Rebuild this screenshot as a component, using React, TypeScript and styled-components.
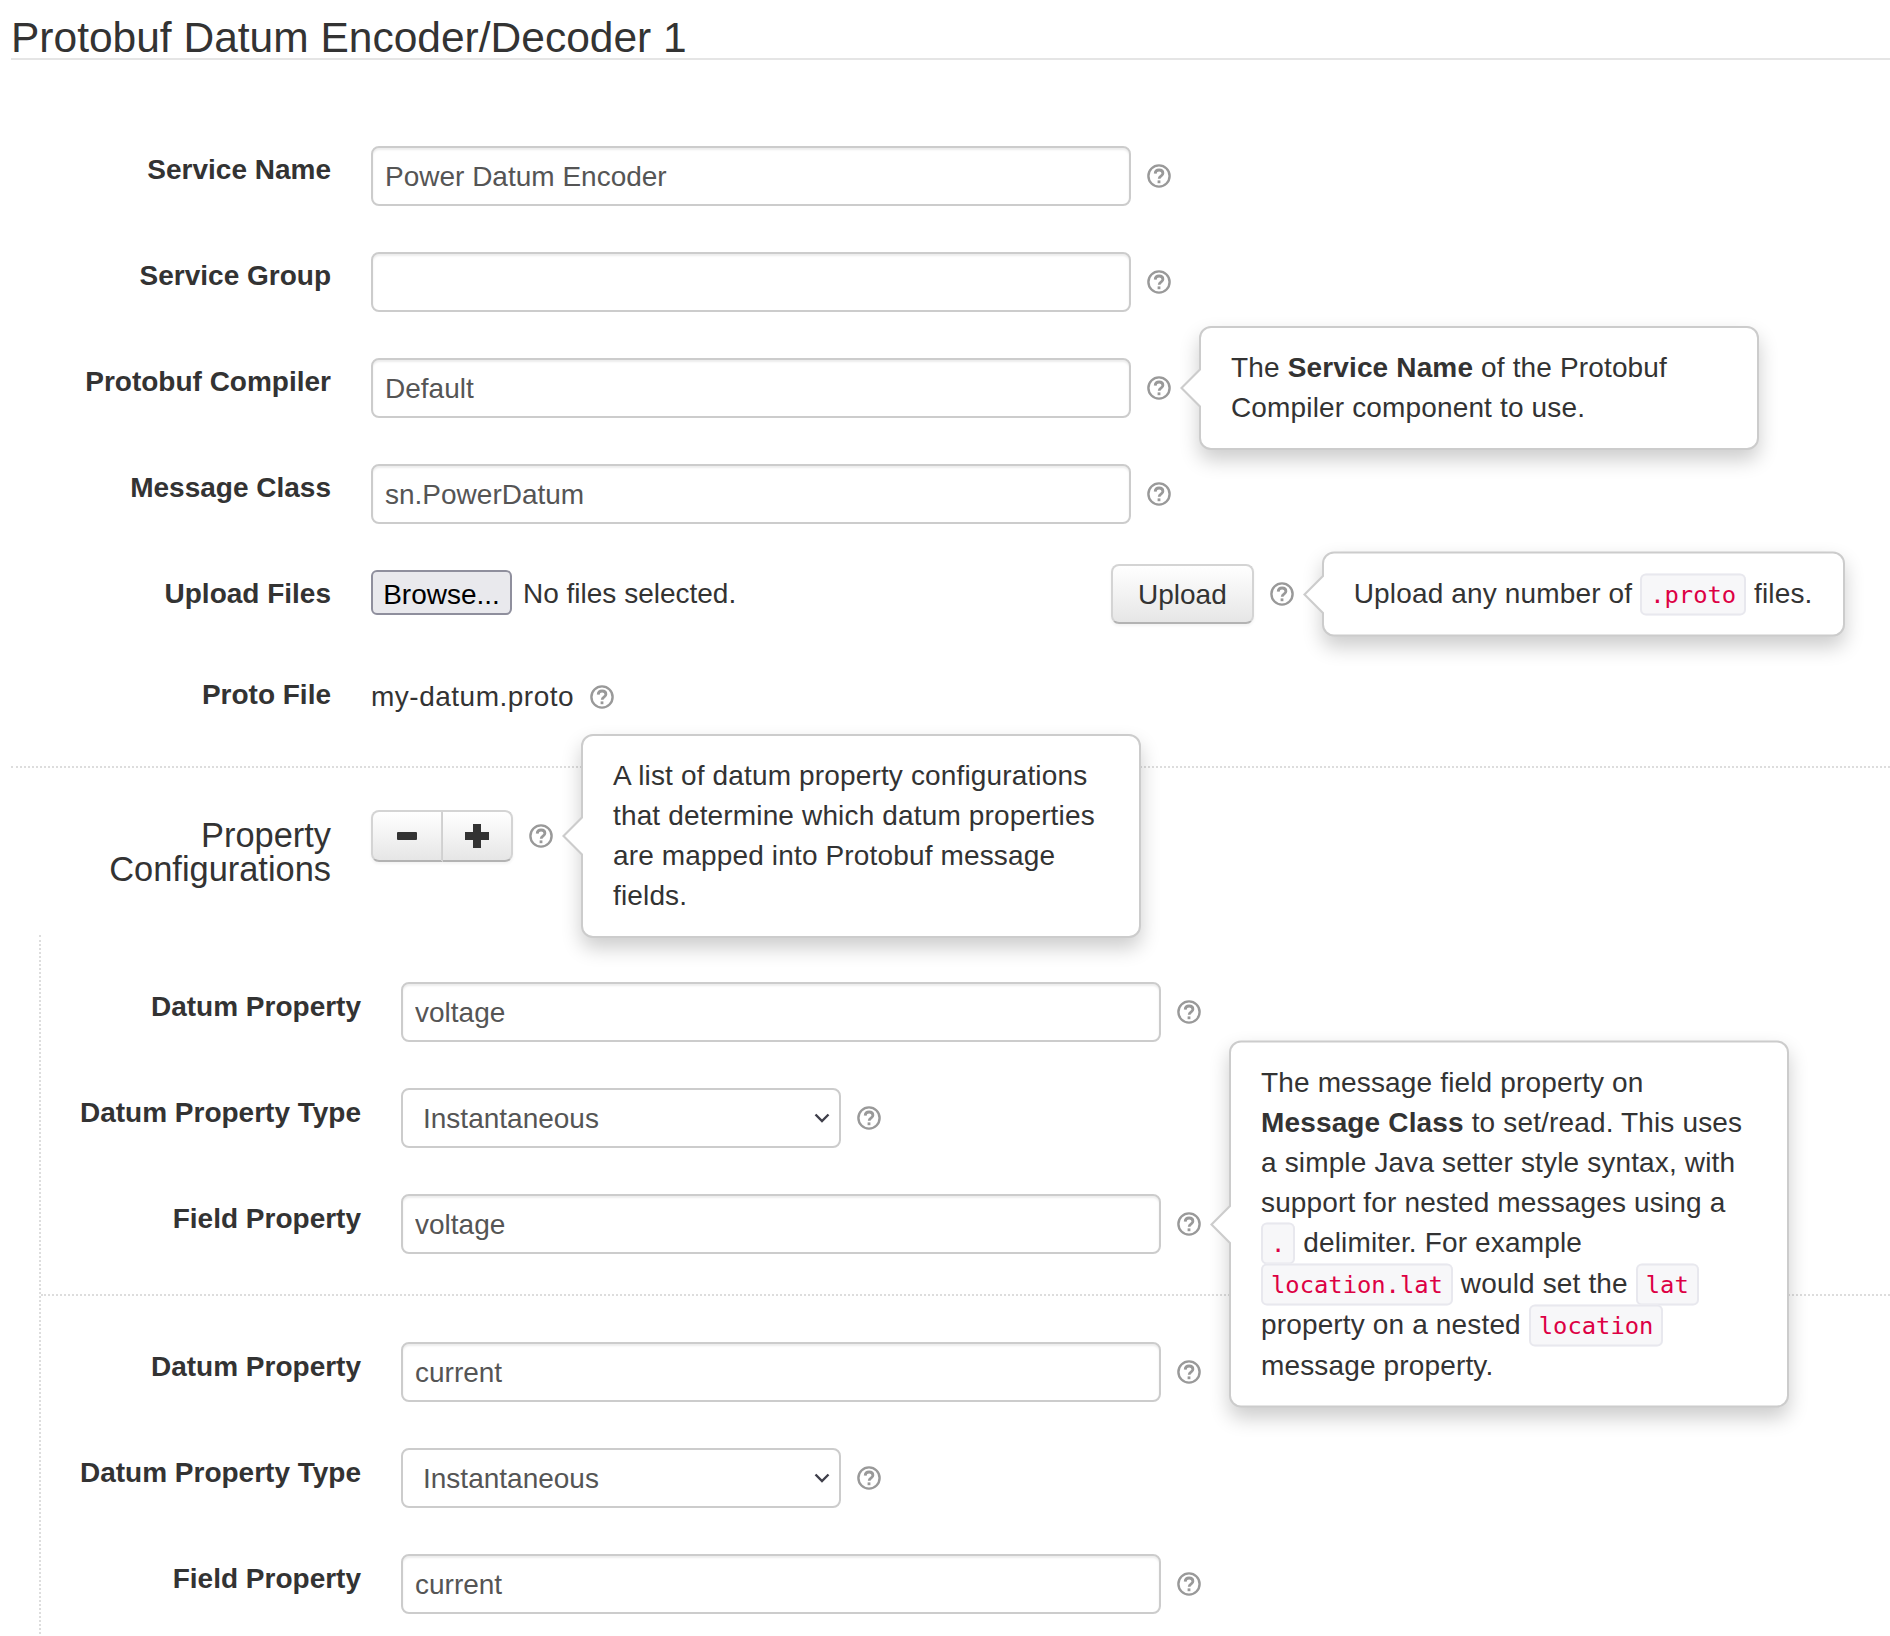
import React from 'react';
import styled, { createGlobalStyle } from 'styled-components';

const GlobalStyle = createGlobalStyle`
  body {
    margin: 0;
    background: #fff;
    color: #333;
    font-family: "Liberation Sans", Arial, sans-serif;
    font-size: 28px;
    line-height: 40px;
  }
`;

const Page = styled.div`
  height: 1636px;
  overflow: hidden;
`;

const Title = styled.h1`
  margin: 0 0 0 11px;
  height: 58px;
  border-bottom: 2px solid #e5e5e5;
  font-size: 42.5px;
  font-weight: 400;
  line-height: 76px;
  white-space: nowrap;
  box-sizing: content-box;
`;

const Form = styled.form<{ $top: number }>`
  padding: ${(p) => p.$top}px 0 0 11px;
`;

const Row = styled.div<{ $after?: number }>`
  display: grid;
  grid-template-columns: 320px 1fr;
  column-gap: 40px;
  align-items: start;
  margin-bottom: ${(p) => p.$after ?? 46}px;
`;

const Label = styled.label<{ $top?: number }>`
  padding-top: ${(p) => p.$top ?? 4}px;
  font-weight: 700;
  text-align: right;
  white-space: nowrap;
`;

const SectionLabel = styled.div`
  padding-top: 8px;
  font-size: 34.4px;
  line-height: 34px;
  text-align: right;
`;

const Control = styled.div`
  display: flex;
  align-items: center;
  gap: 16px;
`;

const TextInput = styled.input`
  box-sizing: border-box;
  width: 760px;
  height: 60px;
  padding: 2px 12px 0;
  border: 2px solid #ccc;
  border-radius: 8px;
  background: #fff;
  box-shadow: inset 0 2px 2px rgba(0, 0, 0, 0.075);
  color: #555;
  font: inherit;
  outline: none;
`;

const SelectWrap = styled.div`
  position: relative;
  width: 440px;
  height: 60px;
`;

const Select = styled.select`
  appearance: none;
  box-sizing: border-box;
  width: 100%;
  height: 100%;
  padding: 2px 20px 0;
  border: 2px solid #ccc;
  border-radius: 8px;
  background: #fff;
  color: #555;
  font: inherit;
  outline: none;
`;

const Chevron = styled.svg`
  position: absolute;
  top: 25px;
  right: 11px;
  width: 16px;
  height: 10px;
  pointer-events: none;
`;

const FileField = styled.div`
  display: flex;
  align-items: center;
  gap: 11px;
  width: 724px;
  padding-bottom: 3px;
`;

const BrowseButton = styled.button`
  box-sizing: border-box;
  width: 141px;
  height: 45px;
  padding: 3px 0 0;
  border: 2px solid #8f8f9d;
  border-radius: 6px;
  background: #e9e9ed;
  color: #000;
  font: inherit;
`;

const FileStatus = styled.span`
  padding-top: 3px;
`;

const Button = styled.button`
  box-sizing: border-box;
  height: 60px;
  padding: 2px 25px 0;
  border: 2px solid #d4d4d4;
  border-bottom-color: #b3b3b3;
  border-radius: 8px;
  background: linear-gradient(#fff, #e6e6e6);
  box-shadow: 0 2px 3px rgba(0, 0, 0, 0.05);
  color: #333;
  font: inherit;
`;

const ButtonGroup = styled.div`
  display: flex;
`;

const GroupButton = styled(Button)<{ $side: 'left' | 'right' }>`
  display: flex;
  align-items: center;
  justify-content: center;
  width: ${(p) => (p.$side === 'left' ? 72 : 70)}px;
  height: 52px;
  padding: 0;
  border-radius: ${(p) => (p.$side === 'left' ? '8px 0 0 8px' : '0 8px 8px 0')};
  ${(p) => (p.$side === 'right' ? 'border-left: 0;' : '')}
`;

const StaticText = styled.div`
  display: flex;
  align-items: center;
  gap: 16px;
  padding-top: 2px;
  letter-spacing: 0.5px;
`;

const HelpWrap = styled.span`
  position: relative;
  display: inline-flex;
  flex: none;
  width: 24px;
  height: 24px;
  letter-spacing: 0;
`;

const Popover = styled.div<{ $width?: string }>`
  position: absolute;
  z-index: 2;
  top: 50%;
  left: 52px;
  box-sizing: border-box;
  width: ${(p) => p.$width ?? '560px'};
  padding: 20px 30px;
  border: 2px solid #ccc;
  border-radius: 12px;
  background: #fff;
  box-shadow: 0 10px 20px rgba(0, 0, 0, 0.2);
  color: #333;
  letter-spacing: 0.15px;
  transform: translateY(-50%);

  &::before,
  &::after {
    content: '';
    position: absolute;
    top: 50%;
    width: 0;
    height: 0;
    border-style: solid;
    border-width: 20px 20px 20px 0;
    transform: translateY(-50%);
  }

  &::before {
    left: -21px;
    border-color: transparent #ccc transparent transparent;
  }

  &::after {
    left: -18px;
    border-color: transparent #fff transparent transparent;
  }
`;

const Code = styled.code`
  padding: 5px 8px;
  border: 2px solid #e8e8ee;
  border-radius: 6px;
  background: #f7f7f9;
  color: #dd0044;
  font-family: "DejaVu Sans Mono", "Liberation Mono", monospace;
  font-size: 23.8px;
  letter-spacing: 0;
`;

const Divider = styled.hr`
  margin: 0 0 0 11px;
  border: 0;
  border-top: 2px dotted #ddd;
`;

const Nested = styled.div`
  margin: 49px 0 0 39px;
  padding-top: 47px;
  padding-bottom: 60px;
  border-left: 2px dotted #ddd;
`;

const ItemDivider = styled.hr`
  margin: 0 0 46px;
  border: 0;
  border-top: 2px dotted #ddd;
`;

const HelpIcon: React.FC = () => (
  <svg width="24" height="24" viewBox="0 0 24 24" fill="none">
    <circle cx="12" cy="12" r="10.6" stroke="#999" strokeWidth="2.4" />
    <path
      d="M8.2 9.6c.1-2.200 1.700-3.600 3.900-3.600 2.200 0 3.800 1.300 3.800 3.200 0 1.500-.9 2.200-1.900 2.900-1 .7-1.800 1.200-1.800 2.600"
      stroke="#999"
      strokeWidth="2.8"
    />
    <rect x="10.600" y="16.400" width="2.800" height="2.800" fill="#999" />
  </svg>
);

const Help: React.FC<{ children?: React.ReactNode; width?: string }> = ({ children, width }) => (
  <HelpWrap>
    <HelpIcon />
    {children && <Popover $width={width}>{children}</Popover>}
  </HelpWrap>
);

const PropertyItem: React.FC<{ value: string; children?: React.ReactNode }> = ({ value, children }) => (
  <>
    <Row>
      <Label $top={5}>Datum Property</Label>
      <Control>
        <TextInput defaultValue={value} />
        <Help />
      </Control>
    </Row>
    <Row>
      <Label $top={5}>Datum Property Type</Label>
      <Control>
        <SelectWrap>
          <Select defaultValue="Instantaneous">
            <option>Instantaneous</option>
            <option>Accumulating</option>
            <option>Status</option>
          </Select>
          <Chevron viewBox="0 0 16 10" fill="none">
            <path d="M1.5 1.500 8 8l6.500-6.500" stroke="#3f3f4a" strokeWidth="2.4" />
          </Chevron>
        </SelectWrap>
        <Help />
      </Control>
    </Row>
    <Row $after={40}>
      <Label $top={5}>Field Property</Label>
      <Control>
        <TextInput defaultValue={value} />
        {children ?? <Help />}
      </Control>
    </Row>
  </>
);

export default function App() {
  return (
    <Page>
      <GlobalStyle />
      <Title>Protobuf Datum Encoder/Decoder 1</Title>
      <Form $top={86}>
        <Row>
          <Label>Service Name</Label>
          <Control>
            <TextInput defaultValue="Power Datum Encoder" />
            <Help />
          </Control>
        </Row>
        <Row>
          <Label>Service Group</Label>
          <Control>
            <TextInput />
            <Help />
          </Control>
        </Row>
        <Row>
          <Label>Protobuf Compiler</Label>
          <Control>
            <TextInput defaultValue="Default" />
            <Help>
              The <b>Service Name</b> of the Protobuf Compiler component to use.
            </Help>
          </Control>
        </Row>
        <Row $after={40}>
          <Label>Message Class</Label>
          <Control>
            <TextInput defaultValue="sn.PowerDatum" />
            <Help />
          </Control>
        </Row>
        <Row $after={51}>
          <Label $top={10}>Upload Files</Label>
          <Control>
            <FileField>
              <BrowseButton type="button">Browse...</BrowseButton>
              <FileStatus>No files selected.</FileStatus>
            </FileField>
            <Button type="button">Upload</Button>
            <Help width="523px">
              Upload any number of <Code>.proto</Code> files.
            </Help>
          </Control>
        </Row>
        <Row $after={49}>
          <Label $top={0}>Proto File</Label>
          <StaticText>
            my-datum.proto
            <Help />
          </StaticText>
        </Row>
      </Form>
      <Divider />
      <Form $top={42}>
        <Row $after={0}>
          <SectionLabel>
            Property
            <br />
            Configurations
          </SectionLabel>
          <Control>
            <ButtonGroup>
              <GroupButton type="button" $side="left" aria-label="Remove">
                <svg width="20" height="8" viewBox="0 0 20 8">
                  <rect width="20" height="8" rx="1" fill="#333" />
                </svg>
              </GroupButton>
              <GroupButton type="button" $side="right" aria-label="Add">
                <svg width="24" height="24" viewBox="0 0 24 24">
                  <path d="M8 0h8v8h8v8h-8v8H8v-8H0V8h8z" fill="#333" />
                </svg>
              </GroupButton>
            </ButtonGroup>
            <Help>
              A list of datum property configurations that determine which datum properties are mapped
              into Protobuf message fields.
            </Help>
          </Control>
        </Row>
      </Form>
      <Nested>
        <PropertyItem value="voltage">
          <Help>
            The message field property on <b>Message Class</b> to set/read. This uses a simple Java setter
            style syntax, with support for nested messages using a <Code>.</Code> delimiter. For example{' '}
            <Code>location.lat</Code> would set the <Code>lat</Code> property on a nested{' '}
            <Code>location</Code> message property.
          </Help>
        </PropertyItem>
        <ItemDivider />
        <PropertyItem value="current" />
      </Nested>
    </Page>
  );
}
